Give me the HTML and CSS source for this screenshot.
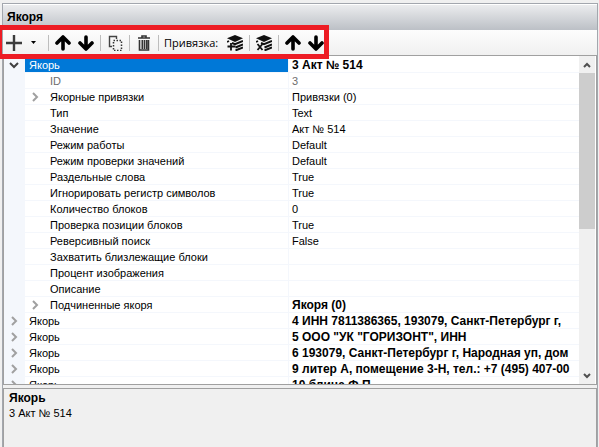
FILE: index.html
```
<!DOCTYPE html>
<html lang="ru">
<head>
<meta charset="utf-8">
<title>Якоря</title>
<link rel="stylesheet" href="styles.css">
</head>
<body>
<svg class="defs" aria-hidden="true">
  <symbol id="up" viewBox="0 0 16 16"><path d="M8 14V3M2 8l6-6 6 6" fill="none" stroke="#000" stroke-width="3.600" stroke-linecap="round" stroke-linejoin="round"/></symbol>
  <symbol id="down" viewBox="0 0 16 16"><path d="M8 2v11M2 8l6 6 6-6" fill="none" stroke="#000" stroke-width="3.600" stroke-linecap="round" stroke-linejoin="round"/></symbol>
  <symbol id="layers" viewBox="0 0 16 16"><path d="M8 0l8 3.200-8 3.800-8-3.800z" fill="#111"/><path d="M0 7l2-1M5 8l3 1.200 8-3.200M8.500 12.500l7.500-3.100M8.500 15.500l7.500-3.100" fill="none" stroke="#111" stroke-width="1.900"/></symbol>
  <symbol id="right" viewBox="0 0 8 10"><path d="M2 1l4 4-4 4" fill="none" stroke="#a0a0a0" stroke-width="2"/></symbol>
  <symbol id="open" viewBox="0 0 10 8"><path d="M1 2l4 4 4-4" fill="none" stroke="#404040" stroke-width="2"/></symbol>
</svg>
<main class="panel">
  <h1 class="title">Якоря</h1>
  <div class="toolbar" role="toolbar">
    <button class="tool" aria-label="Добавить"><svg viewBox="0 0 16 16"><path d="M8 0v16M0 8h16" stroke="#3c3c3c" stroke-width="2.400"/></svg></button>
    <button class="drop" aria-label="Варианты"><svg viewBox="0 0 5 3"><path d="M0 0h5L2.500 3z"/></svg></button>
    <i class="sep"></i>
    <button class="tool" aria-label="Вверх"><svg><use href="#up"/></svg></button>
    <button class="tool" aria-label="Вниз"><svg><use href="#down"/></svg></button>
    <i class="sep"></i>
    <button class="tool" aria-label="Копировать"><svg viewBox="0 0 16 16"><path d="M5 11.500H2.500V1.500h7V4" fill="none" stroke="#444" stroke-width="1.400"/><path d="M6.500 5.500h8v10h-8z" fill="none" stroke="#333" stroke-width="1.500" stroke-dasharray="1.500 1.500"/></svg></button>
    <i class="sep"></i>
    <button class="tool" aria-label="Удалить"><svg viewBox="0 0 16 16"><path d="M2 3h12M6 2.500V1h4v1.500M3.500 5v10h9V5M6.300 5v9M8.500 5v9M10.700 5v9" fill="none" stroke="#333" stroke-width="1.600"/></svg></button>
    <i class="sep"></i>
    <span class="caption">Привязка:</span>
    <button class="tool" aria-label="Добавить привязку"><svg viewBox="0 0 16 16"><use href="#layers"/><path d="M4 8v7.500M.5 11.500h8" stroke="#111" stroke-width="1.800"/></svg></button>
    <i class="sep"></i>
    <button class="tool" aria-label="Удалить привязку"><svg viewBox="0 0 16 16"><use href="#layers"/><path d="M1.500 9l5 6M6.500 9l-5 6" stroke="#111" stroke-width="1.800"/></svg></button>
    <i class="sep"></i>
    <button class="tool" aria-label="Привязка вверх"><svg><use href="#up"/></svg></button>
    <button class="tool" aria-label="Привязка вниз"><svg><use href="#down"/></svg></button>
    <div class="highlight"></div>
  </div>
  <div class="grid">
    <div class="view">
      <table>
        <colgroup><col class="c-gutter"><col class="c-name"><col></colgroup>
        <tbody>
          <tr class="selected"><td><button class="exp" aria-label="Свернуть"><svg class="wide"><use href="#open"/></svg></button></td><th>Якорь</th><td class="strong">3 Акт № 514</td></tr>
          <tr class="child muted"><td></td><th>ID</th><td>3</td></tr>
          <tr class="child"><td></td><th><button class="exp" aria-label="Развернуть"><svg><use href="#right"/></svg></button>Якорные привязки</th><td>Привязки (0)</td></tr>
          <tr class="child"><td></td><th>Тип</th><td>Text</td></tr>
          <tr class="child"><td></td><th>Значение</th><td>Акт № 514</td></tr>
          <tr class="child"><td></td><th>Режим работы</th><td>Default</td></tr>
          <tr class="child"><td></td><th>Режим проверки значений</th><td>Default</td></tr>
          <tr class="child"><td></td><th>Раздельные слова</th><td>True</td></tr>
          <tr class="child"><td></td><th>Игнорировать регистр символов</th><td>True</td></tr>
          <tr class="child"><td></td><th>Количество блоков</th><td>0</td></tr>
          <tr class="child"><td></td><th>Проверка позиции блоков</th><td>True</td></tr>
          <tr class="child"><td></td><th>Реверсивный поиск</th><td>False</td></tr>
          <tr class="child"><td></td><th>Захватить близлежащие блоки</th><td></td></tr>
          <tr class="child"><td></td><th>Процент изображения</th><td></td></tr>
          <tr class="child"><td></td><th>Описание</th><td></td></tr>
          <tr class="child"><td></td><th><button class="exp" aria-label="Развернуть"><svg><use href="#right"/></svg></button>Подчиненные якоря</th><td class="strong">Якоря (0)</td></tr>
          <tr><td><button class="exp" aria-label="Развернуть"><svg><use href="#right"/></svg></button></td><th>Якорь</th><td class="strong">4 ИНН 7811386365, 193079, Санкт-Петербург г,</td></tr>
          <tr><td><button class="exp" aria-label="Развернуть"><svg><use href="#right"/></svg></button></td><th>Якорь</th><td class="strong">5 ООО "УК "ГОРИЗОНТ", ИНН</td></tr>
          <tr><td><button class="exp" aria-label="Развернуть"><svg><use href="#right"/></svg></button></td><th>Якорь</th><td class="strong">6 193079, Санкт-Петербург г, Народная уп, дом</td></tr>
          <tr><td><button class="exp" aria-label="Развернуть"><svg><use href="#right"/></svg></button></td><th>Якорь</th><td class="strong">9 литер А, помещение 3-Н, тел.: +7 (495) 407-00</td></tr>
          <tr><td><button class="exp" aria-label="Развернуть"><svg><use href="#right"/></svg></button></td><th>Якорь</th><td class="strong">10 блица Ф.П.</td></tr>
        </tbody>
      </table>
    </div>
    <div class="scrollbar">
      <button aria-label="Прокрутить вверх"><svg viewBox="0 0 8 8"><path d="M1 6l3-3 3 3" fill="none" stroke="#505050" stroke-width="2"/></svg></button>
      <div class="track"><div class="thumb"></div></div>
      <button aria-label="Прокрутить вниз"><svg viewBox="0 0 8 8"><path d="M1 2l3 3 3-3" fill="none" stroke="#505050" stroke-width="2"/></svg></button>
    </div>
  </div>
  <section class="help">
    <h2>Якорь</h2>
    <p>3 Акт № 514</p>
  </section>
</main>
</body>
</html>
```
FILE: styles.css
```
* { box-sizing: border-box; }
body {
  margin: 0;
  height: 100vh;
  padding: 3px 1px 0 2px;
  background: #f0f0f0;
  color: #000;
  font: 11px/14px "Liberation Sans", Arial, sans-serif;
  overflow: hidden;
}
button { padding: 0; border: 0; background: none; display: flex; align-items: center; justify-content: center; }
h1, h2, p { margin: 0; }
.defs { position: absolute; width: 0; height: 0; }
.panel {
  height: 100%;
  display: flex;
  flex-direction: column;
  border: solid #a3a7ae;
  border-width: 1px 1px 0;
}
.title {
  flex: none;
  height: 26px;
  padding: 0 4px;
  border-top: 1px solid #fff;
  background: linear-gradient(#ebecee, #bcc0c6);
  font-size: 12px;
  line-height: 24px;
}
.toolbar {
  position: relative;
  flex: none;
  height: 25px;
  display: flex;
  align-items: center;
  padding: 0 2px;
  background: linear-gradient(#fdfdfd, #f0f0f0);
}
.tool { flex: none; width: 23px; height: 22px; }
.tool svg { width: 16px; height: 16px; }
.tool:first-child { width: 17px; }
.drop { width: 23px; height: 22px; }
.drop svg { width: 5px; height: 3px; }
.sep { flex: none; width: 1px; height: 16px; margin: 0 2px 0 3px; background: #bdbdbd; }
.caption { padding: 0 5px 0 3px; font: 11px/16px "Open Sans", "Noto Sans", sans-serif; white-space: nowrap; }
.highlight {
  position: absolute;
  top: -5px;
  left: -3px;
  width: 329px;
  height: 34px;
  border: 5px solid #ed1c24;
  border-left-width: 2px;
  z-index: 1;
  pointer-events: none;
}
.grid {
  flex: 1;
  min-height: 0;
  display: flex;
  border: 1px solid #a0a0a0;
  background: #fff;
}
.view { flex: 1; min-width: 0; overflow: hidden; padding-top: 1px; }
table { width: 100%; table-layout: fixed; border-spacing: 0; }
.c-gutter { width: 21px; }
.c-name { width: 264px; }
th, td { height: 16px; padding: 1px 3px 0; border-bottom: 1px solid #f4f7fc; text-align: left; font-weight: normal; white-space: nowrap; overflow: hidden; }
th { position: relative; padding-left: 4px; border-right: 1px solid #f4f7fc; }
td:first-child { padding: 0; background: #f4f7fc; }
.child th { padding-left: 25px; }
.muted th, .muted td { color: #6d6d6d; }
.selected th { background: #0078d7; color: #fff; }
.strong { font-weight: bold; font-size: 12px; padding-right: 0; }
.exp { width: 19px; height: 15px; }
.exp svg { width: 8px; height: 10px; }
.exp .wide { width: 10px; height: 8px; }
th .exp { position: absolute; left: 0; top: 0; }
.scrollbar { flex: none; width: 17px; display: flex; flex-direction: column; background: #f0f0f0; border-right: 1px solid #fff; }
.scrollbar button { flex: none; height: 17px; width: 100%; }
.scrollbar svg { width: 8px; height: 8px; }
.track { flex: 1; }
.thumb { height: 53%; background: #cdcdcd; }
.help {
  flex: none;
  height: 59px;
  margin-top: 3px;
  padding: 2px 5px;
  border: solid #a0a0a0;
  border-width: 1px 1px 0;
}
.help h2 { font-size: 12px; line-height: 15px; }
```
